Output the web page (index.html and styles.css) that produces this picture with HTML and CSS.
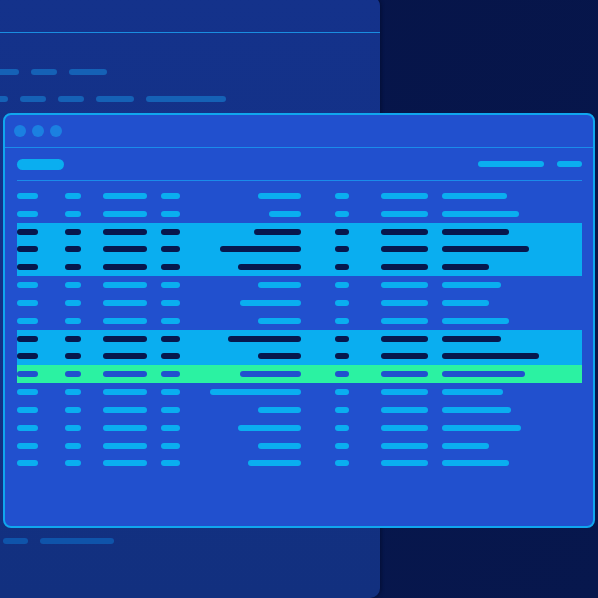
FILE: index.html
```html
<!DOCTYPE html>
<html lang="en">
<head>
<meta charset="utf-8">
<title>Table view</title>
<link rel="stylesheet" href="styles.css">
</head>
<body>
<div class="desk">
  <div class="back">
    <div class="back-head"></div>
    <div class="back-body">
      <div class="back-row">
        <span class="bbar" style="width:39px"></span>
        <span class="bbar" style="width:26px"></span>
        <span class="bbar" style="width:38px"></span>
      </div>
      <div class="back-row">
        <span class="bbar" style="width:26px"></span>
        <span class="bbar" style="width:26px"></span>
        <span class="bbar" style="width:26px"></span>
        <span class="bbar" style="width:38px"></span>
        <span class="bbar" style="width:80px"></span>
      </div>
    </div>
    <div class="back-foot">
      <span class="bbar" style="width:25px"></span>
      <span class="bbar" style="width:74px"></span>
    </div>
  </div>

  <div class="win">
    <div class="titlebar">
      <span class="dot"></span><span class="dot"></span><span class="dot"></span>
    </div>
    <div class="content">
      <div class="toolbar">
        <span class="pill"></span>
        <div class="tools">
          <span class="bar" style="width:66px"></span>
          <span class="bar" style="width:25px"></span>
        </div>
      </div>
      <div class="table" id="table"></div>
    </div>
  </div>
</div>
<script src="app.js"></script>
</body>
</html>
```

FILE: app.js
```js
const rows = [
  ['n',43,65],['n',32,77],['h',47,67],['h',81,87],['h',63,47],
  ['n',43,59],['n',61,47],['n',43,67],['h',73,59],['h',43,97],
  ['g',61,83],['n',91,61],['n',43,69],['n',63,79],['n',43,47],['n',53,67]
];
const table = document.getElementById('table');
rows.forEach(([t,w5,w8]) => {
  const r = document.createElement('div');
  r.className = 'row ' + (t === 'h' ? 'row-hl' : t === 'g' ? 'row-ok' : '');
  const widths = [21,16,44,19,w5,14,47,w8];
  widths.forEach((w,i) => {
    const c = document.createElement('div');
    c.className = 'cell' + (i === 4 ? ' cell-num' : '');
    const b = document.createElement('span');
    b.className = 'bar';
    b.style.width = w + 'px';
    c.appendChild(b);
    r.appendChild(c);
  });
  table.appendChild(r);
});
```

FILE: styles.css
```css
html, body {
  margin: 0;
  padding: 0;
}
body {
  width: 598px;
  height: 598px;
  overflow: hidden;
  background: #06154a;
  font-family: "Liberation Sans", Arial, sans-serif;
}
.desk {
  position: relative;
  width: 598px;
  height: 598px;
  overflow: hidden;
  background: linear-gradient(135deg, #061448 0%, #07174d 100%);
}

/* back window */
.back {
  position: absolute;
  left: -40px;
  top: -4px;
  width: 420px;
  height: 602px;
  background: linear-gradient(180deg, #14328b 0%, #12307f 100%);
  border-radius: 0 10px 10px 0;
  display: flex;
  flex-direction: column;
  box-shadow: 2px 0 3px rgba(4, 14, 50, 0.6);
}
.back-head {
  height: 36px;
  border-bottom: 1px solid #1a8de0;
  flex: none;
}
.back-body {
  padding: 36px 0 0 20px;
  display: flex;
  flex-direction: column;
  gap: 21px;
}
.back-row {
  display: flex;
  gap: 12px;
  height: 6px;
}
.back-row:last-child {
  margin-left: 2px;
}
.bbar {
  display: block;
  height: 6px;
  border-radius: 3px;
  background: #1561b6;
}
.back-foot {
  margin-top: auto;
  margin-bottom: 54px;
  padding-left: 43px;
  display: flex;
  gap: 12px;
}
.back-foot .bbar {
  background: #0f54aa;
}

/* front window */
.win {
  position: absolute;
  left: 3px;
  top: 113px;
  width: 592px;
  height: 415px;
  box-sizing: border-box;
  border: 2px solid #10a6ee;
  border-radius: 8px;
  background: #2150ce;
  display: flex;
  flex-direction: column;
}
.titlebar {
  height: 32px;
  flex: none;
  border-bottom: 1px solid #1a8cea;
  display: flex;
  align-items: center;
  gap: 6px;
  padding-left: 9px;
}
.dot {
  width: 12px;
  height: 12px;
  border-radius: 50%;
  background: #1b80e1;
}
.content {
  margin: 0 11px 0 12px;
}
.toolbar {
  height: 33px;
  border-bottom: 1px solid #1a8cea;
  display: flex;
  align-items: center;
  justify-content: space-between;
  box-sizing: border-box;
}
.pill {
  width: 47px;
  height: 11px;
  border-radius: 6px;
  background: #0aaef0;
}
.tools {
  display: flex;
  gap: 13px;
  align-items: center;
}
.table {
  margin-top: 6px;
  display: flex;
  flex-direction: column;
}
.row {
  height: 17.83px;
  display: grid;
  grid-template-columns: 48px 38px 58px 44px 130px 46px 61px 140px;
  align-items: center;
}
.cell {
  display: flex;
  align-items: center;
}
.cell-num {
  justify-content: flex-end;
  padding-right: 34px;
}
.bar {
  display: block;
  height: 6px;
  border-radius: 3px;
  background: #0aaef0;
}
.row-hl {
  background: #0aaef0;
}
.row-hl .bar {
  background: #07174d;
}
.row-ok {
  background: #2bf2a2;
}
.row-ok .bar {
  background: #2150ce;
}
```
